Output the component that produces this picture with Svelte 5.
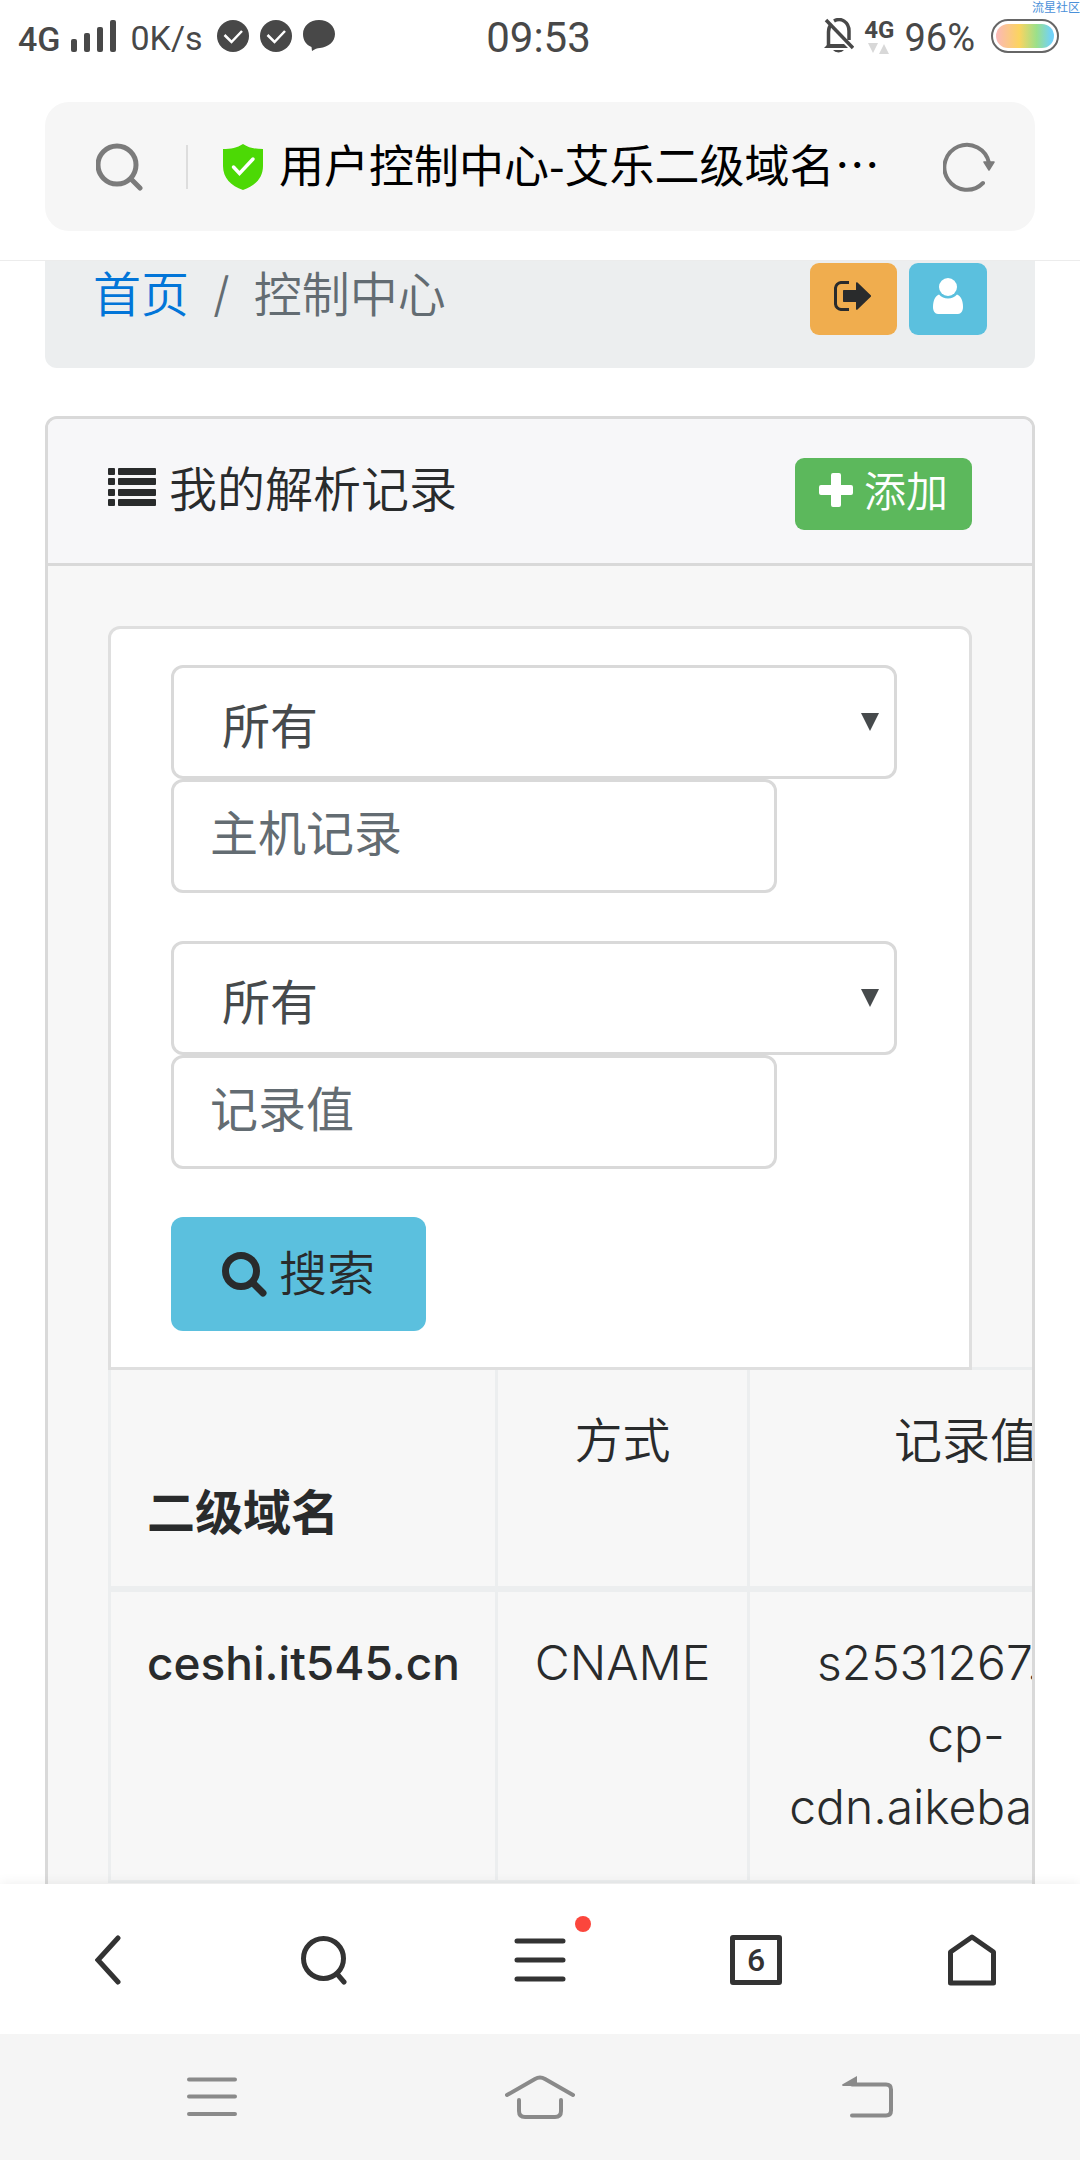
<script>
  let recordType = $state('all')
  let lineType = $state('all')
  let host = $state('')
  let value = $state('')
  let tabCount = 6

  const records = [
    { domain: 'ceshi.it545.cn', type: 'CNAME', value: 's2531267.us-cp-cdn.aikeba.com' }
  ]

  function search(e) {
    e.preventDefault()
  }
</script>

<div class="screen">
  <header>
    <div class="status">
      <div class="left">
        <span class="net">4G</span>
        <svg class="bars" width="46" height="32" viewBox="0 0 46 32" fill="#484848">
          <rect x="0" y="19" width="6" height="13" rx="2" />
          <rect x="13" y="13" width="6" height="19" rx="2" />
          <rect x="26" y="7" width="6" height="25" rx="2" />
          <rect x="39" y="0" width="6" height="32" rx="2" />
        </svg>
        <span class="speed">0K/s</span>
        {#each [1, 2] as n (n)}
          <svg width="32" height="32" viewBox="0 0 32 32">
            <circle cx="16" cy="16" r="16" fill="#484848" />
            <path d="M7.500 15l7 7L25 11" fill="none" stroke="#fff" stroke-width="2.500" />
          </svg>
        {/each}
        <svg width="32" height="32" viewBox="0 0 32 32" fill="#484848">
          <path d="M16 0c9 0 16 6 16 14s-7 13-15 14c-3 0-5 1-8 3l-.500-4C3 25 0 20 0 14 0 6 7 0 16 0z" />
        </svg>
      </div>
      <time class="clock">09:53</time>
      <div class="right">
        <svg width="30" height="36" viewBox="0 0 30 36">
          <path d="M4.500 28V14c0-3 1-6 3-8M10 3c7-4 15 1 15 10v9" fill="none" stroke="#484848" stroke-width="3.500" />
          <path d="M0 30l4-4h16l4 4zM9 32h11a6 4 0 0 1-11 0z" fill="#484848" />
          <path d="M2 2l27 28" stroke="#484848" stroke-width="3.500" />
        </svg>
        <div class="data">
          <span>4G</span>
          <svg width="22" height="11" viewBox="0 0 22 11" fill="#d8d8d8">
            <path d="M0 0h10L5 10zM11 11h10L16 1z" />
          </svg>
        </div>
        <span class="percent">96%</span>
        <div class="battery"></div>
      </div>
      <span class="mark">流星社区</span>
    </div>

    <div class="address">
      <svg width="48" height="48" viewBox="0 0 48 48" fill="none" stroke="#7b7b7b" stroke-linecap="round">
        <circle cx="21" cy="22" r="19" stroke-width="5" />
        <path d="M35 36l9 9" stroke-width="5" />
      </svg>
      <span class="divider"></span>
      <svg width="40" height="46" viewBox="0 0 40 46">
        <path d="M20 0c6 4 12 5 20 5v17c0 12-8 20-20 24C8 42 0 34 0 22V5c8 0 14-1 20-5z" fill="#4cd905" />
        <path d="M10.500 23l6 6.500L30 15" fill="none" stroke="#fff" stroke-width="3.500" stroke-linecap="round" />
      </svg>
      <span class="title">用户控制中心-艾乐二级域名控制中心</span>
      <button class="plain" aria-label="刷新">
        <svg width="52" height="50" viewBox="0 0 52 50">
          <path d="M40 41A22.500 22.500 0 1 1 46 21" fill="none" stroke="#7b7b7b" stroke-width="4" stroke-linecap="round" />
          <path d="M41 20h10l-5 8z" fill="#7b7b7b" stroke="#7b7b7b" stroke-width="1.500" stroke-linejoin="round" />
        </svg>
      </button>
    </div>
  </header>

  <main>
    <nav class="breadcrumb">
      <a href="#home">首页</a>
      <span class="slash">/</span>
      <span class="current">控制中心</span>
      <div class="actions">
        <button class="btn-sm warning" aria-label="退出">
          <svg width="39" height="30" viewBox="0 0 39 30">
            <path d="M15 1.500H8A6 6 0 0 0 1.500 8v14A6 6 0 0 0 8 28.500h7" fill="none" stroke="#292b2c" stroke-width="3" />
            <path d="M10 9h12V2c0-1 1-1 1.500-.500L37 14.500v1L23.500 28.500c-.500.500-1.500.500-1.500-.500v-7H10c-.700 0-1-.300-1-1V10c0-.700.300-1 1-1z" fill="#292b2c" />
          </svg>
        </button>
        <button class="btn-sm info" aria-label="用户">
          <svg width="30" height="36" viewBox="0 0 30 36" fill="#fff">
            <circle cx="15" cy="9" r="9" />
            <path d="M6 16.500C2 18 0 23 0 29c0 4 2 7 5 7h20c3 0 5-3 5-7 0-6-2-11-6-12.500a12 12 0 0 1-18 0z" />
          </svg>
        </button>
      </div>
    </nav>

    <section class="card">
      <div class="card-header">
        <h1>
          <svg width="48" height="38" viewBox="0 0 48 38" fill="#292b2c">
            {#each [0, 10, 21, 31] as y (y)}
              <rect x="0" {y} width="7" height="7" rx="1" />
              <rect x="10" {y} width="38" height="7" rx="1" />
            {/each}
          </svg>
          我的解析记录
        </h1>
        <button class="btn-sm success">
          <svg width="34" height="34" viewBox="0 0 34 34" fill="#fff">
            <path d="M14 0h6q2 0 2 2v10h10q2 0 2 2v6q0 2-2 2H22v10q0 2-2 2h-6q-2 0-2-2V22H2q-2 0-2-2v-6q0-2 2-2h10V2q0-2 2-2z" />
          </svg>
          添加
        </button>
      </div>

      <div class="card-body">
        <form onsubmit={search}>
          <div class="group">
            <select aria-label="记录类型" bind:value={recordType}>
              <option value="all">所有</option>
            </select>
            <input type="text" aria-label="主机记录" placeholder="主机记录" bind:value={host} />
          </div>
          <div class="group">
            <select aria-label="线路" bind:value={lineType}>
              <option value="all">所有</option>
            </select>
            <input type="text" aria-label="记录值" placeholder="记录值" bind:value={value} />
          </div>
          <button class="btn info" type="submit">
            <svg width="45" height="45" viewBox="0 0 45 45" fill="none" stroke="#292b2c">
              <circle cx="19" cy="19" r="15.500" stroke-width="7" />
              <path d="M31 31l10 10" stroke-width="7" stroke-linecap="round" />
            </svg>
            搜索
          </button>
        </form>

        <table>
          <colgroup>
            <col class="col-domain" />
            <col class="col-type" />
            <col class="col-value" />
          </colgroup>
          <thead>
            <tr>
              <th class="name">二级域名</th>
              <th>方式</th>
              <th>记录值</th>
            </tr>
          </thead>
          <tbody>
            {#each records as record (record.domain)}
              <tr>
                <td class="name">{record.domain}</td>
                <td>{record.type}</td>
                <td>{record.value}</td>
              </tr>
            {/each}
          </tbody>
        </table>
      </div>
    </section>
  </main>

  <nav class="toolbar">
    <button class="plain" aria-label="后退">
      <svg width="26" height="50" viewBox="0 0 26 50" fill="none" stroke="#333" stroke-width="5" stroke-linecap="round">
        <path d="M23 3L3 25l20 22" />
      </svg>
    </button>
    <button class="plain" aria-label="搜索">
      <svg width="46" height="50" viewBox="0 0 46 50" fill="none" stroke="#333" stroke-width="5" stroke-linecap="round">
        <circle cx="22.500" cy="23.500" r="20" />
        <path d="M37 40l6 7" />
      </svg>
    </button>
    <button class="plain" aria-label="菜单">
      <span class="menu">
        <svg width="52" height="44" viewBox="0 0 52 44" stroke="#333" stroke-width="5" stroke-linecap="round">
          <path d="M3 3h46M3 22h46M3 41h46" />
        </svg>
        <span class="dot"></span>
      </span>
    </button>
    <button class="plain" aria-label="标签页">
      <span class="tabs">{tabCount}</span>
    </button>
    <button class="plain" aria-label="主页">
      <svg width="48" height="52" viewBox="0 0 48 52" fill="none" stroke="#333" stroke-width="5" stroke-linejoin="round">
        <path d="M24 3l21.500 15v31h-43V18z" />
      </svg>
    </button>
  </nav>

  <nav class="system">
    <button class="plain" aria-label="最近任务">
      <svg width="50" height="40" viewBox="0 0 50 40" stroke="#8a8a8a" stroke-width="4" stroke-linecap="round">
        <path d="M2 2.500h46M2 19.500h46M2 37h46" />
      </svg>
    </button>
    <button class="plain" aria-label="桌面">
      <svg width="70" height="44" viewBox="0 0 70 44" fill="none" stroke="#8a8a8a" stroke-width="4" stroke-linecap="round">
        <path d="M2 20L30 4q5-3 10 0l28 16M14 25v11q0 6 6 6h30q6 0 6-6V25" />
      </svg>
    </button>
    <button class="plain" aria-label="返回">
      <svg width="52" height="42" viewBox="0 0 52 42">
        <path d="M10 39.500h34q5 0 5-5v-21q0-5-5-5H10" fill="none" stroke="#8a8a8a" stroke-width="4" stroke-linecap="round" />
        <path d="M15 0v10H1q-2-1 0-2z" fill="#8a8a8a" />
      </svg>
    </button>
  </nav>
</div>

<style>
  :global(body) {
    margin: 0;
    background: #fff;
  }

  .screen, .screen :global(*) {
    box-sizing: border-box;
  }

  .screen {
    display: flex;
    flex-direction: column;
    height: 100vh;
    overflow: hidden;
    font-family: Inter, "Noto Sans CJK SC", sans-serif;
    font-size: 48px;
    font-weight: 350;
    line-height: 72px;
    color: #292b2c;
  }

  svg {
    display: block;
    flex: none;
  }

  button, input, select {
    font: inherit;
    color: inherit;
  }

  .plain {
    display: flex;
    align-items: center;
    justify-content: center;
    padding: 0;
    border: 0;
    background: none;
  }

  /* phone status bar */
  header {
    flex: none;
    padding-bottom: 29px;
    border-bottom: 1px solid #ececec;
  }

  .status {
    position: relative;
    display: grid;
    grid-template-columns: 1fr auto 1fr;
    align-items: center;
    height: 72px;
    margin-bottom: 30px;
    padding: 0 21px 0 18px;
    font-family: Roboto, sans-serif;
    font-size: 34px;
    font-weight: 400;
    line-height: 36px;
    color: #484848;
  }

  .left, .right {
    display: flex;
    align-items: center;
    gap: 11px;
  }

  .right {
    justify-content: flex-end;
    gap: 10px;
  }

  .net {
    padding-top: 6px;
    font-weight: 500;
  }

  .bars {
    margin-right: 2px;
  }

  .speed, .clock, .percent {
    padding-top: 4px;
  }

  .speed {
    margin-right: 3px;
  }

  .clock {
    font-size: 42px;
  }

  .data {
    display: flex;
    flex-direction: column;
    align-items: center;
    gap: 2px;
    font-size: 24px;
    font-weight: 700;
    line-height: 22px;
  }

  .percent {
    margin-right: 6px;
    font-size: 38px;
  }

  .battery {
    width: 68px;
    height: 34px;
    padding: 3px;
    border: 2px solid #666;
    border-radius: 17px;
    background: linear-gradient(90deg, #fbb8b8, #fbd460 40%, #9be08a 70%, #72d2f8 95%) content-box;
  }

  .mark {
    position: absolute;
    top: 0;
    right: 0;
    font-family: "Noto Sans CJK SC", sans-serif;
    font-size: 12px;
    line-height: 14px;
    color: #4a90d9;
  }

  .address {
    display: flex;
    align-items: center;
    height: 129px;
    margin: 0 45px;
    padding: 0 40px 0 51px;
    border-radius: 24px;
    background: #f6f6f6;
  }

  .divider {
    width: 2px;
    height: 44px;
    margin: 0 35px 0 42px;
    background: #ddd;
  }

  .title {
    flex: 1;
    min-width: 0;
    margin: 0 60px 0 16px;
    padding-bottom: 5px;
    overflow: hidden;
    font-family: "Noto Sans CJK SC", sans-serif;
    font-size: 45px;
    font-weight: 400;
    line-height: 66px;
    color: #000;
    text-overflow: ellipsis;
    white-space: nowrap;
  }

  main {
    flex: 1;
    min-height: 0;
    padding: 0 45px;
    overflow: hidden;
  }

  .breadcrumb {
    display: flex;
    align-items: flex-start;
    margin-bottom: 48px;
    padding: 2px 48px 33px;
    border-radius: 0 0 12px 12px;
    background: #eceeef;
    line-height: 64px;
  }

  .breadcrumb a {
    color: #0275d8;
    text-decoration: none;
  }

  .slash {
    padding: 0 24px;
    color: #636c72;
  }

  .current {
    color: #636c72;
  }

  .actions {
    display: flex;
    gap: 12px;
    margin-left: auto;
  }

  .btn-sm {
    display: flex;
    gap: 11px;
    height: 72px;
    padding: 15px 24px;
    border: 0;
    border-radius: 9px;
    font-size: 42px;
    line-height: 38px;
  }

  .warning {
    background: #f0ad4e;
    padding-top: 18px;
  }

  .info {
    background: #5bc0de;
  }

  .success {
    background: #5cb85c;
    color: #fff;
  }

  .card {
    overflow: hidden;
    border: 3px solid #d9d9d9;
    border-radius: 12px;
    background: #f7f7f7;
  }

  .card-header {
    display: flex;
    align-items: flex-start;
    justify-content: space-between;
    padding: 39px 60px 33px;
    border-bottom: 3px solid #d9d9d9;
    background: #f7f7f9;
  }

  h1 {
    display: flex;
    gap: 13px;
    margin: 0;
    font-size: 48px;
    font-weight: 350;
    line-height: 64px;
  }

  h1 svg {
    margin-top: 10px;
  }

  .card-body {
    padding: 60px;
  }

  form {
    position: relative;
    margin-bottom: -3px;
    padding: 36px 60px;
    border: 3px solid #dfdfdf;
    border-radius: 12px 12px 0 0;
    background: #fff;
  }

  .group {
    display: flex;
    flex-direction: column;
    align-items: flex-start;
    margin-bottom: 48px;
  }

  select, input {
    display: block;
    height: 114px;
    border: 3px solid #d9d9d9;
    border-radius: 12px;
    background: #fff;
    color: #464a4c;
    font-weight: 400;
  }

  select {
    width: calc(100% - 12px);
    padding: 9px 48px 0;
    appearance: none;
    background: #fff url("data:image/svg+xml,%3Csvg xmlns='http://www.w3.org/2000/svg' width='18' height='18'%3E%3Cpath d='M0 0h18L9 18z' fill='%23464a4c'/%3E%3C/svg%3E") no-repeat right 15px center;
  }

  input {
    width: 606px;
    max-width: 100%;
    padding: 0 36px 6px;
  }

  input::placeholder {
    color: #636c72;
    opacity: 1;
  }

  .btn {
    display: flex;
    align-items: center;
    gap: 12px;
    height: 114px;
    padding: 0 51px;
    border: 0;
    border-radius: 12px;
  }

  table {
    width: 1074px;
    table-layout: fixed;
    border-spacing: 0;
  }

  .col-domain {
    width: 387px;
  }

  .col-type {
    width: 252px;
  }

  .col-value {
    width: 435px;
  }

  th, td {
    padding: 35px 36px 37px;
    border-left: 3px solid #eceeef;
    font-weight: 300;
    text-align: center;
    vertical-align: top;
  }

  th {
    height: 225px;
    border-top: 3px solid #eceeef;
    border-bottom: 6px solid #eceeef;
    font-weight: 350;
  }

  td {
    border-bottom: 3px solid #eceeef;
  }

  .name {
    font-size: 46px;
    font-weight: 500;
    text-align: left;
    white-space: nowrap;
  }

  th.name {
    font-size: 48px;
    font-weight: 700;
    vertical-align: bottom;
  }

  /* browser toolbar */
  .toolbar {
    position: relative;
    flex: none;
    display: grid;
    grid-template-columns: repeat(5, 1fr);
    height: 150px;
    padding-top: 2px;
    background: #fff;
    box-shadow: 0 0 12px rgba(0, 0, 0, 0.08);
  }

  .menu {
    position: relative;
  }

  .dot {
    position: absolute;
    top: -22px;
    right: -25px;
    width: 16px;
    height: 16px;
    border-radius: 50%;
    background: #fb463c;
  }

  .tabs {
    width: 52px;
    height: 50px;
    border: 5px solid #333;
    border-radius: 3px;
    font-family: Roboto, sans-serif;
    font-size: 32px;
    font-weight: 500;
    line-height: 40px;
    color: #333;
  }

  .system {
    position: relative;
    flex: none;
    display: grid;
    grid-template-columns: repeat(3, 1fr);
    height: 126px;
    padding: 0 48px;
    background: #f5f5f5;
  }
</style>
